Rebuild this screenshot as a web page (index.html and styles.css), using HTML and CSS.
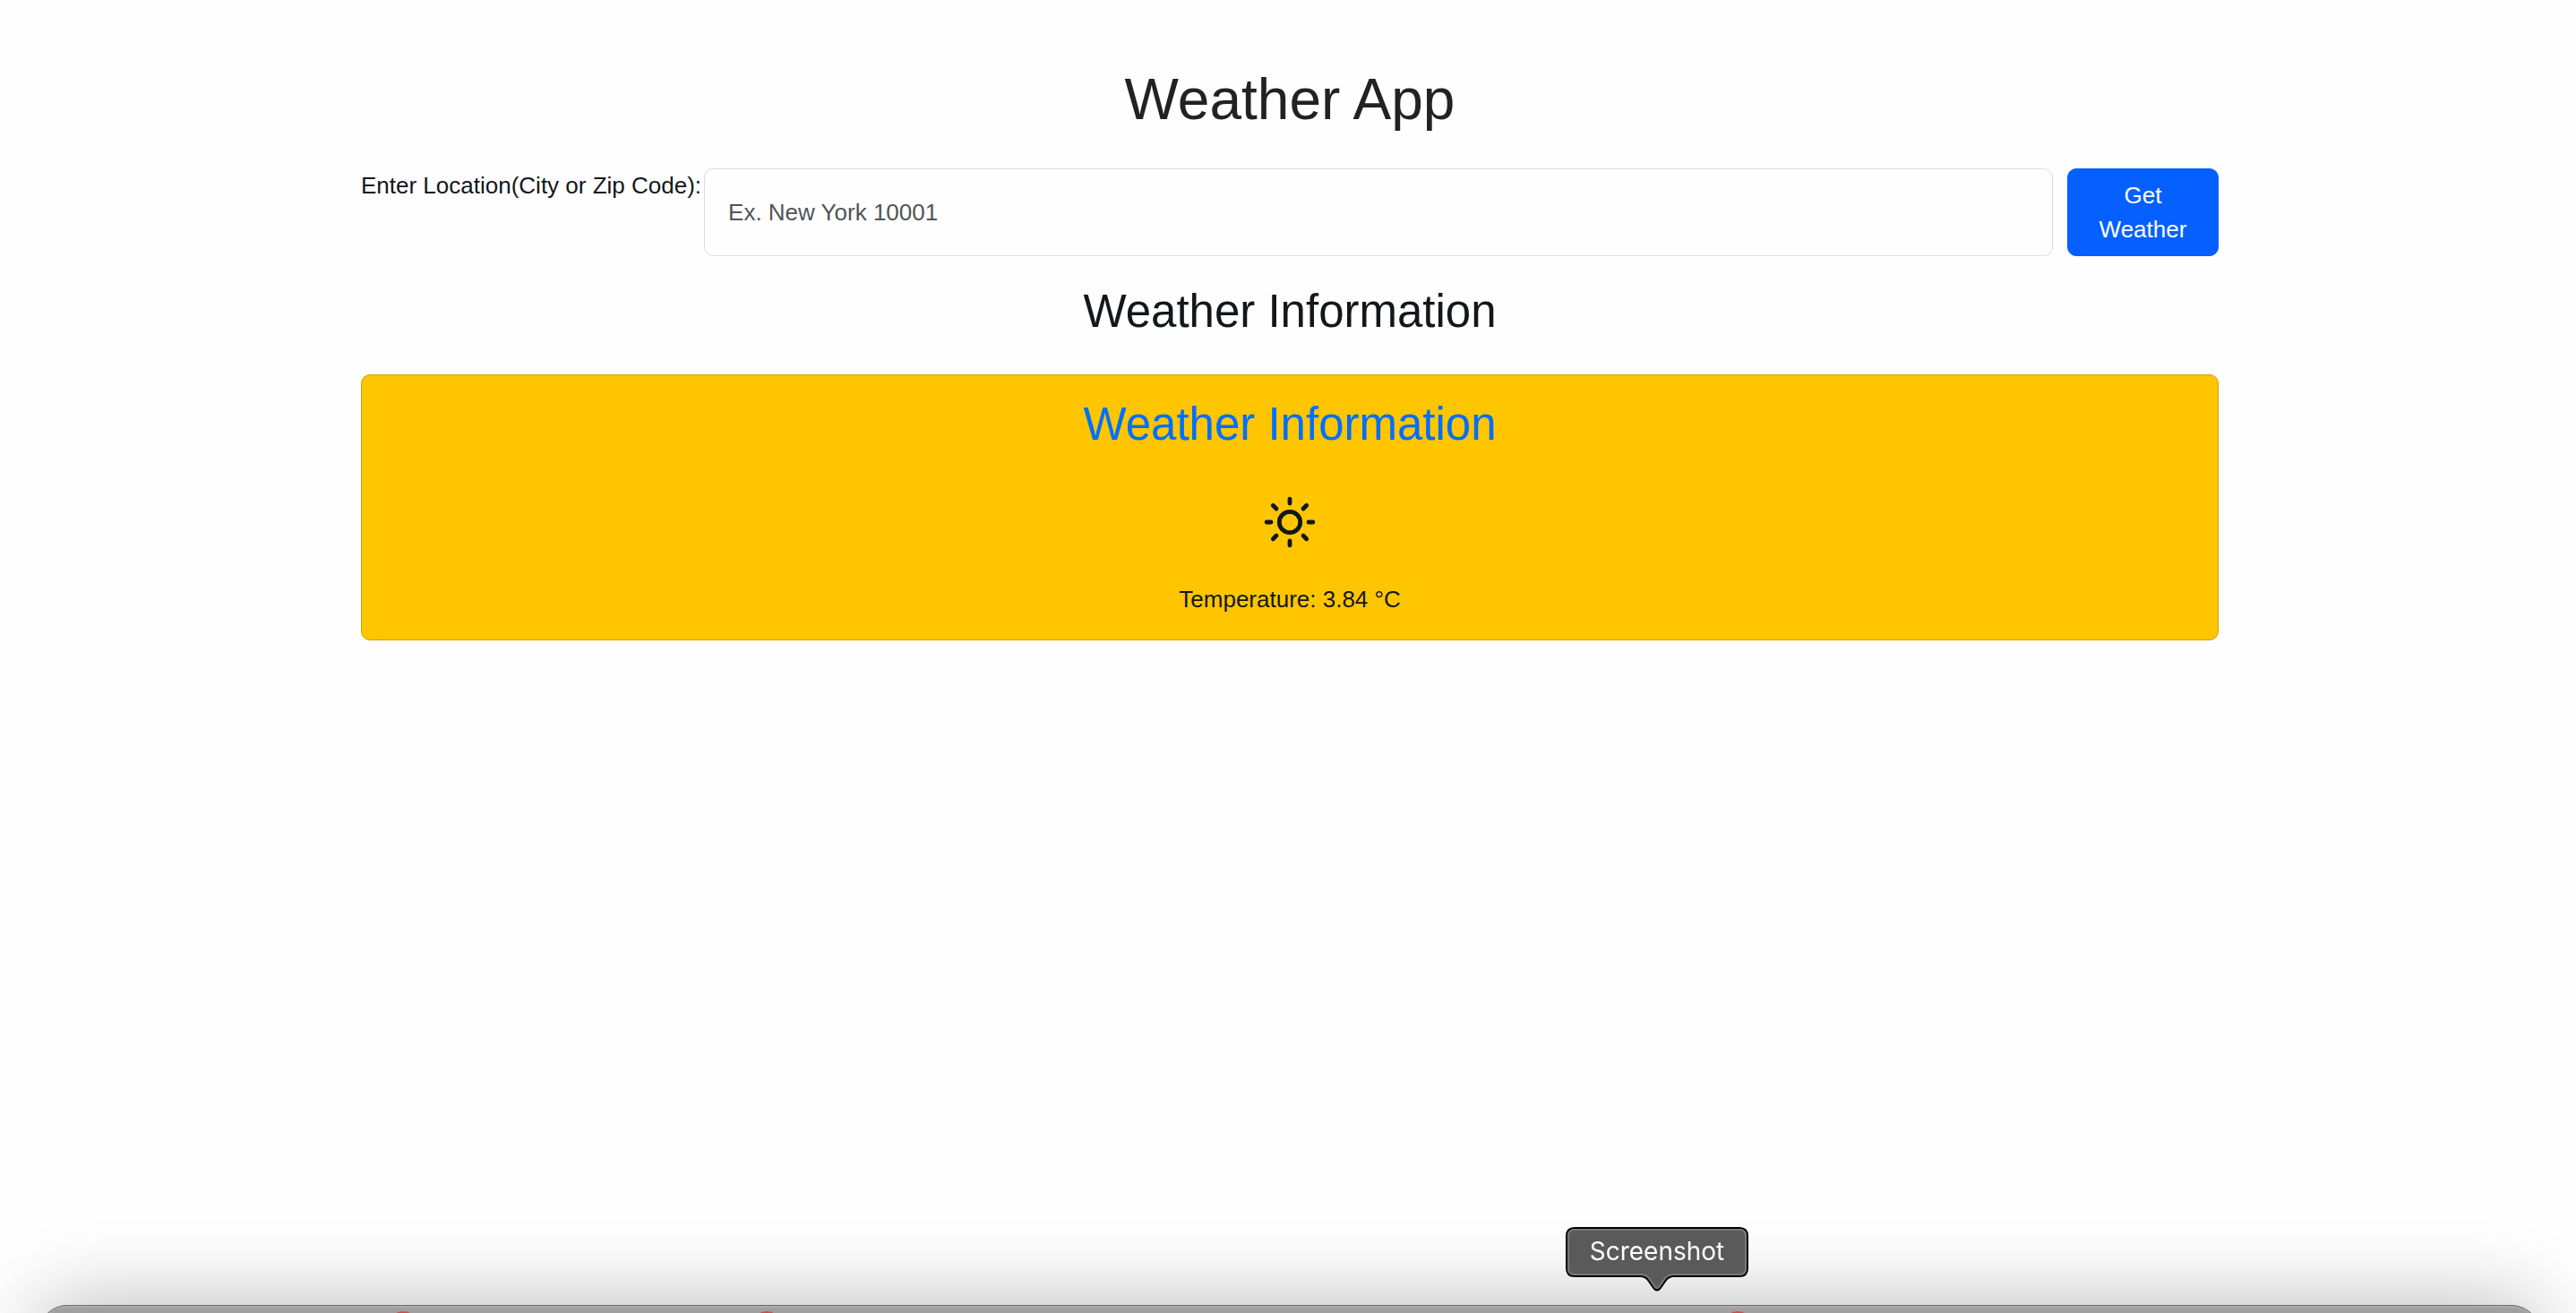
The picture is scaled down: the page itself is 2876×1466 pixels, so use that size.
FILE: index.html
```html
<!DOCTYPE html>
<html lang="en">
<head>
  <meta charset="utf-8">
  <meta name="viewport" content="width=device-width, initial-scale=1">
  <title>Weather App</title>
  <link rel="stylesheet" href="styles.css">
</head>
<body>
  <main class="container">
    <h1 class="app-title">Weather App</h1>
    <form class="search">
      <label class="search-label" for="location">Enter Location(City or Zip Code):</label>
      <input class="search-input" id="location" type="text" placeholder="Ex. New York 10001">
      <button class="search-button" type="button">Get<br>Weather</button>
    </form>
    <h2 class="section-title">Weather Information</h2>
    <section class="card">
      <h2 class="section-title card-title">Weather Information</h2>
      <svg class="sun" viewBox="-29 -29 58 58" aria-hidden="true">
        <g fill="none" stroke="currentColor" stroke-width="4.8" stroke-linecap="round">
          <circle r="11.7"/>
          <path d="M0-25.9V-21M0 21V25.9M-25.9 0H-21M21 0H25.9M-18.7-18.7L-15-15M15 15L18.7 18.7M18.7-18.7L15-15M-15 15L-18.7 18.7"/>
        </g>
      </svg>
      <p class="reading">Temperature: 3.84 °C</p>
    </section>
  </main>

  <div class="desktop">
    <div class="dock">
      <span class="badge badge-first"></span>
      <span class="badge badge-second"></span>
      <span class="badge badge-third"></span>
    </div>
    <div class="tooltip">
      <svg class="tooltip-shape" viewBox="0 0 204 74" aria-hidden="true">
        <path d="M10 1H194Q203 1 203 10V46Q203 55 194 55H120Q116 55 113 58L105 69Q102 72 99 69L91 58Q88 55 84 55H10Q1 55 1 46V10Q1 1 10 1Z" fill="#5a5a5a" stroke="#000" stroke-width="2"/>
        <path d="M10 3H194Q201 3 201 10V46Q201 53 194 53H120Q115 53 111 57L104 67Q102 69 100 67L93 57Q89 53 84 53H10Q3 53 3 46V10Q3 3 10 3Z" fill="none" stroke="#777" stroke-width="2"/>
      </svg>
      <span class="tooltip-text">Screenshot</span>
    </div>
  </div>
</body>
</html>
```
FILE: styles.css
```css
* {
  box-sizing: border-box;
}

body {
  margin: 0;
  min-height: 100vh;
  background: #fefefe;
  color: #12171b;
  font-family: "Liberation Sans", Arial, sans-serif;
  font-size: 26px;
  line-height: 38px;
}

h1,
h2,
p {
  margin: 0;
  font-weight: 400;
}

.container {
  padding: 73px 399px 0 403px;
}

.app-title {
  margin-bottom: 39px;
  color: #222;
  font-size: 64px;
  line-height: 76px;
  text-align: center;
}

.search {
  display: flex;
  margin-bottom: 31px;
}

.search-label {
  margin-right: 3px;
  white-space: nowrap;
}

.search-input {
  flex: 1;
  min-width: 0;
  margin-right: 16px;
  padding: 10px 26px;
  border: 1px solid #dadde2;
  border-radius: 10px;
  background: #fefefe;
  color: inherit;
  font: inherit;
}

.search-input::placeholder {
  color: #515457;
  opacity: 1;
}

.search-button {
  width: 169px;
  padding: 10px;
  border: 1px solid #0560ff;
  border-radius: 10px;
  background: #0560ff;
  color: #fff;
  font: inherit;
}

.section-title {
  font-size: 51px;
  line-height: 62px;
  text-align: center;
}

.card {
  display: flex;
  flex-direction: column;
  align-items: center;
  margin-top: 39px;
  padding: 24px 26px 26px;
  border: 1px solid #cba00a;
  border-radius: 10px;
  background: #ffc600;
}

.card-title {
  color: #006fff;
}

.sun {
  width: 58px;
  height: 58px;
  margin: 49px 0 38px;
}

/* Desktop layer over the page */
.desktop {
  position: fixed;
  inset: 0;
  overflow: hidden;
  pointer-events: none;
}

.dock {
  position: absolute;
  right: 40px;
  bottom: -171px;
  left: 43px;
  height: 180px;
  border: 1px solid #6c6c6c;
  border-radius: 32px;
  background: #a0a0a0;
  box-shadow: inset 0 2px 0 #acacac, 0 0 90px rgba(0, 0, 0, 0.28);
}

.badge {
  position: absolute;
  top: 6px;
  width: 32px;
  height: 32px;
  border-radius: 50%;
  background: #c8504e;
}

.badge-first {
  left: 390px;
}

.badge-second {
  left: 796px;
}

.badge-third {
  left: 1880px;
}

.tooltip {
  position: absolute;
  bottom: 22px;
  left: 1748px;
  width: 204px;
  height: 74px;
}

.tooltip-shape {
  position: absolute;
  inset: 0;
}

.tooltip-text {
  position: relative;
  display: block;
  color: #fff;
  font-family: Inter, sans-serif;
  font-size: 28px;
  line-height: 54px;
  text-align: center;
}
```
